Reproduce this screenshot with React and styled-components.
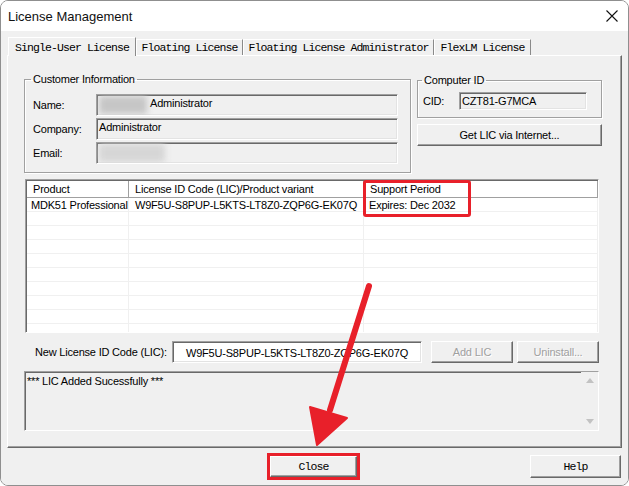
import React from 'react'
import styled, { createGlobalStyle } from 'styled-components'

const GlobalStyle = createGlobalStyle`
  body {
    margin: 0;
    background: #fff;
  }
  * {
    box-sizing: border-box;
  }
`

const rows = [
  ['MDK51 Professional', 'W9F5U-S8PUP-L5KTS-LT8Z0-ZQP6G-EK07Q', 'Expires: Dec 2032'],
  ['', '', ''], ['', '', ''], ['', '', ''], ['', '', ''],
  ['', '', ''], ['', '', ''], ['', '', ''], ['', '', ''], ['', '', ''],
]

const tabs = [
  { name: 'Single-User License', w: 128, active: true },
  { name: 'Floating License', w: 107 },
  { name: 'Floating License Administrator', w: 191 },
  { name: 'FlexLM License', w: 97 },
]

class LicenseDialog extends React.Component {
  render() {
    return (
      <Window>
        <TitleBar>
          <span>License Management</span>
          <svg width="12" height="12" viewBox="0 0 12 12">
            <path d="M0.5 0.5 L11.5 11.5 M11.5 0.5 L0.5 11.5" stroke="#111" strokeWidth="1.1" />
          </svg>
        </TitleBar>
        <Body>
          <TabRow>
            {tabs.map(t => (
              <Tab key={t.name} w={t.w} active={t.active}>{t.name}</Tab>
            ))}
          </TabRow>
          <Panel>
            <TopRow>
              <Group w={387} pad="8px 11px 8px 8px">
                <Legend ml={-2}>Customer Information</Legend>
                <FieldList>
                  <FieldRow>
                    <Label w={63}>Name:</Label>
                    <Field w={302}>
                      <Smudge w={48} />
                      <span style={{ marginLeft: 3 }}>Administrator</span>
                    </Field>
                  </FieldRow>
                  <FieldRow>
                    <Label w={63}>Company:</Label>
                    <Field w={302}>Administrator</Field>
                  </FieldRow>
                  <FieldRow>
                    <Label w={63}>Email:</Label>
                    <Field w={302}>
                      <Smudge w={66} light />
                    </Field>
                  </FieldRow>
                </FieldList>
              </Group>
              <RightCol>
                <Group w={185} pad="5px 14px 7px 5px">
                  <Legend ml={-1}>Computer ID</Legend>
                  <FieldRow>
                    <Label w={36}>CID:</Label>
                    <Field w={128} h={18}>CZT81-G7MCA</Field>
                  </FieldRow>
                </Group>
                <Button w={185} h={22}>Get LIC via Internet...</Button>
              </RightCol>
            </TopRow>

            <TableFrame>
              <TableGrid>
                <HeadCell>Product</HeadCell>
                <HeadCell>License ID Code (LIC)/Product variant</HeadCell>
                <HeadCell>Support Period</HeadCell>
                <HeadCell last />
                {rows.map((r, i) => (
                  <React.Fragment key={i}>
                    <Cell pad={4}>{r[0]}</Cell>
                    <Cell pad={6}>{r[1]}</Cell>
                    <Cell pad={5}>{r[2]}</Cell>
                    <Cell last />
                  </React.Fragment>
                ))}
              </TableGrid>
              <Highlight />
            </TableFrame>

            <NewRow>
              <Label w={137}>New License ID Code (LIC):</Label>
              <Field w={250} white center>W9F5U-S8PUP-L5KTS-LT8Z0-ZQP6G-EK07Q</Field>
              <Button w={82} h={22} disabled style={{ marginLeft: 9 }}>Add LIC</Button>
              <Button w={82} h={22} disabled style={{ marginLeft: 4 }}>Uninstall...</Button>
            </NewRow>

            <MessageBox>
              <MessageText>*** LIC Added Sucessfully ***</MessageText>
              <ScrollBar>
                <Arrow up />
                <Arrow />
              </ScrollBar>
            </MessageBox>
          </Panel>

          <BottomBar>
            <Button w={87} h={21} mono marked>Close</Button>
            <Button w={91} h={23} mono push>Help</Button>
          </BottomBar>
        </Body>

        <Overlay width="629" height="486" viewBox="0 0 629 486">
          <line x1="369" y1="286" x2="330" y2="410" stroke="#e8202a" strokeWidth="6" strokeLinecap="round" />
          <polygon points="317,445 310,407 347,418" fill="#e8202a" stroke="#e8202a" strokeWidth="2" strokeLinejoin="round" />
        </Overlay>
      </Window>
    )
  }
}

const Window = styled.div`
  position: relative;
  width: 629px;
  height: 486px;
  border: 1px solid #8f8f8f;
  border-radius: 8px;
  overflow: hidden;
  display: flex;
  flex-direction: column;
  font-family: "Liberation Sans", Arial, sans-serif;
  font-size: 11px;
  letter-spacing: -0.2px;
  color: #000;
`
const TitleBar = styled.div`
  flex: none;
  height: 30px;
  background: #fff;
  display: flex;
  align-items: center;
  justify-content: space-between;
  padding: 0 10px 0 7px;
  font-size: 13px;
  letter-spacing: 0;
  color: #111;
`
const Body = styled.div`
  flex: 1;
  background: #f0f0f0;
  padding: 6px 6px 0 6px;
  display: flex;
  flex-direction: column;
`
const TabRow = styled.div`
  display: flex;
  align-items: flex-end;
  height: 18px;
  padding-left: 1px;
  position: relative;
  z-index: 1;
`
const Tab = styled.div`
  width: ${props => props.w}px;
  height: ${props => props.active ? '19px' : '16px'};
  margin-bottom: ${props => props.active ? '-1px' : '0'};
  background: #f0f0f0;
  border: 1px solid;
  border-bottom: none;
  border-color: #fff #8a8a8a transparent #fff;
  display: flex;
  align-items: center;
  justify-content: center;
  font-family: "Liberation Mono", monospace;
  font-size: 11.5px;
  letter-spacing: -0.9px;
  white-space: nowrap;
`
const Panel = styled.div`
  height: 393px;
  border: 1px solid;
  border-color: #fff #696969 #696969 #fff;
  box-shadow: inset -1px -1px 0 #a0a0a0;
  padding: 16px 0 0 16px;
`
const TopRow = styled.div`
  display: flex;
  align-items: flex-start;
  gap: 6px;
`
const RightCol = styled.div`
  display: flex;
  flex-direction: column;
  gap: 6px;
  margin-top: 1px;
`
const Group = styled.fieldset`
  margin: 0;
  min-width: 0;
  width: ${props => props.w}px;
  padding: ${props => props.pad};
  border: 1px solid #a0a0a0;
  box-shadow: 1px 1px 0 #fff, inset 1px 1px 0 #fff;
`
const Legend = styled.legend`
  margin-left: ${props => props.ml}px;
  padding: 0 2px;
  line-height: 14px;
  font-size: 11px;
`
const FieldList = styled.div`
  display: flex;
  flex-direction: column;
  gap: 2px;
`
const FieldRow = styled.div`
  display: flex;
  align-items: center;
`
const Label = styled.span`
  width: ${props => props.w}px;
  flex: none;
  white-space: nowrap;
`
const Field = styled.div`
  width: ${props => props.w}px;
  height: ${props => props.h || 22}px;
  flex: none;
  border: 1px solid;
  border-color: #a0a0a0 #fff #fff #a0a0a0;
  box-shadow: inset 1px 1px 0 #696969, inset -1px -1px 0 #e3e3e3;
  background: ${props => props.white ? '#fff' : '#f0f0f0'};
  padding: 1px 2px 0 2px;
  display: flex;
  align-items: ${props => props.center ? 'center' : 'flex-start'};
  justify-content: ${props => props.center ? 'center' : 'flex-start'};
  line-height: 14px;
  white-space: nowrap;
  overflow: hidden;
`
const Smudge = styled.span`
  width: ${props => props.w}px;
  height: 18px;
  flex: none;
  background: ${props => props.light ? '#d6d6d6' : '#c6c6c6'};
  filter: blur(3px);
`
const Button = styled.button`
  width: ${props => props.w}px;
  height: ${props => props.h}px;
  flex: none;
  padding: 0;
  background: #f0f0f0;
  border: 1px solid;
  border-color: #fff #696969 #696969 #fff;
  box-shadow: inset -1px -1px 0 #a0a0a0;
  font-family: ${props => props.mono ? '"Liberation Mono", monospace' : 'inherit'};
  font-size: ${props => props.mono ? '11.5px' : '11px'};
  letter-spacing: ${props => props.mono ? '-0.9px' : '-0.2px'};
  color: ${props => props.disabled ? '#a0a0a0' : '#000'};
  text-shadow: ${props => props.disabled ? '1px 1px 0 #fff' : 'none'};
  margin-left: ${props => props.marked ? '263px' : props.push ? 'auto' : '0'};
  margin-right: ${props => props.push ? '1px' : '0'};
  outline: ${props => props.marked ? '3px solid #e8202a' : 'none'};
  border-radius: 0;
`
const TableFrame = styled.div`
  position: relative;
  margin: 6px 0 0 1px;
  width: 574px;
  height: 154px;
  border: 1px solid;
  border-color: #a0a0a0 #fff #fff #a0a0a0;
  background: #fff;
  overflow: hidden;
`
const TableGrid = styled.div`
  height: 100%;
  border-top: 1px solid #696969;
  border-left: 1px solid #696969;
  display: grid;
  grid-template-columns: 102px 235px 234px 1fr;
  grid-template-rows: 17px;
  grid-auto-rows: 14px;
  overflow: hidden;
`
const HeadCell = styled.div`
  background: #fff;
  border-bottom: ${props => props.last ? 'none' : '1px solid #a0a0a0'};
  border-right: ${props => props.last ? 'none' : '1px solid #a0a0a0'};
  padding-left: 6px;
  display: flex;
  align-items: center;
  white-space: nowrap;
`
const Cell = styled.div`
  border-right: ${props => props.last ? 'none' : '1px solid #f0f0f0'};
  border-bottom: 1px solid #f0f0f0;
  padding-left: ${props => props.pad || 0}px;
  padding-top: 1px;
  line-height: 13px;
  white-space: nowrap;
  overflow: hidden;
`
const Highlight = styled.div`
  position: absolute;
  left: 337px;
  top: 0;
  width: 108px;
  height: 37px;
  border: 3px solid #e8202a;
  border-radius: 3px;
`
const NewRow = styled.div`
  margin-top: 8px;
  display: flex;
  align-items: center;
  height: 22px;
  padding-left: 11px;
`
const MessageBox = styled.div`
  margin-top: 8px;
  width: 575px;
  height: 60px;
  border: 1px solid;
  border-color: #a0a0a0 #fff #fff #a0a0a0;
  box-shadow: inset 1px 1px 0 #696969;
  display: flex;
  background: #f0f0f0;
`
const MessageText = styled.div`
  flex: 1;
  padding: 2px 2px;
  line-height: 14px;
`
const ScrollBar = styled.div`
  width: 17px;
  flex: none;
  background: #f0f0f0;
  display: flex;
  flex-direction: column;
  justify-content: space-between;
  align-items: center;
  padding: 6px 0 6px;
`
const Arrow = styled.div`
  width: 0;
  height: 0;
  border-left: 4px solid transparent;
  border-right: 4px solid transparent;
  border-bottom: ${props => props.up ? '5px solid #c2c2c2' : 'none'};
  border-top: ${props => props.up ? 'none' : '5px solid #c2c2c2'};
`
const BottomBar = styled.div`
  flex: 1;
  display: flex;
  align-items: center;
`
const Overlay = styled.svg`
  position: absolute;
  left: -1px;
  top: -1px;
  pointer-events: none;
`

export default function App() {
  return (
    <>
      <GlobalStyle />
      <LicenseDialog />
    </>
  )
}
